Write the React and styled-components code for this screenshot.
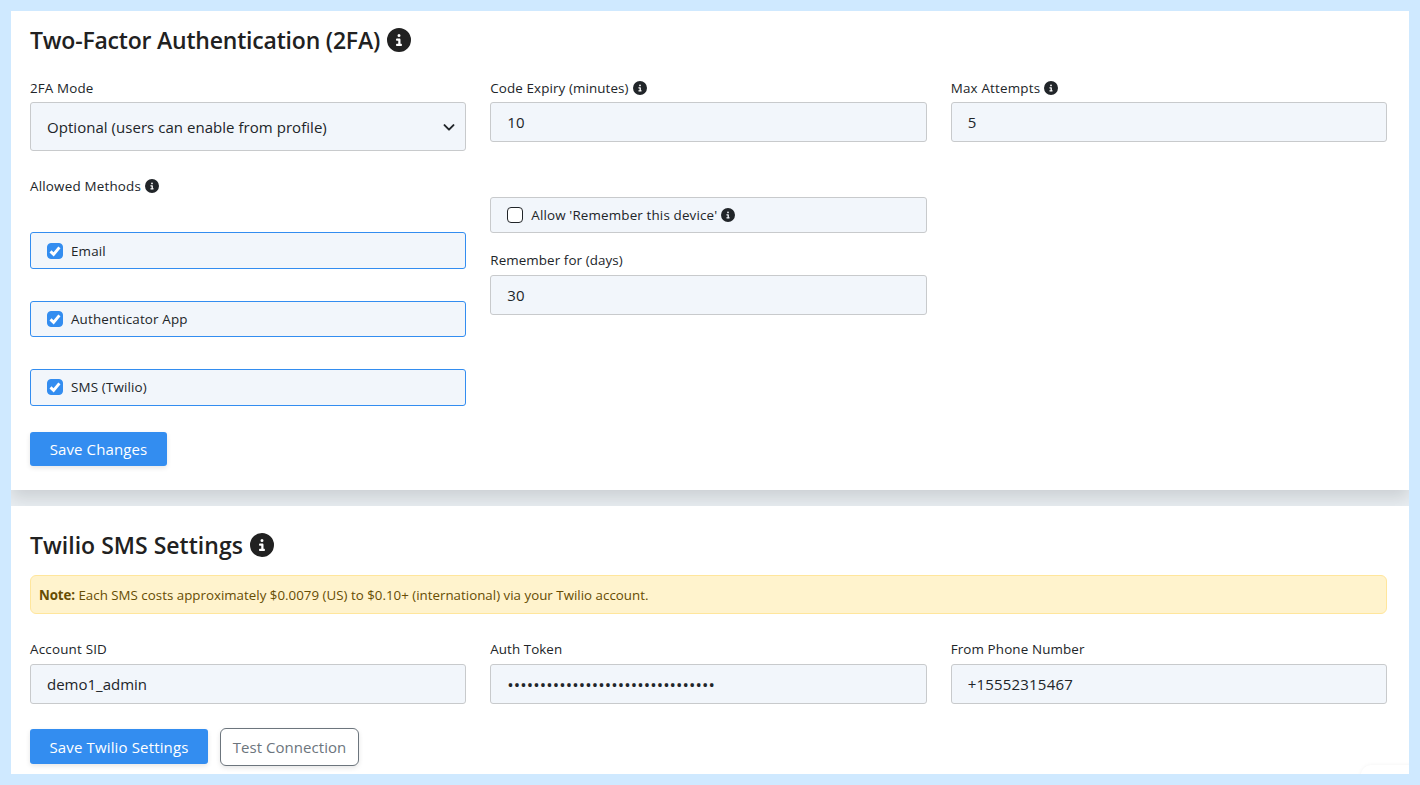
import React from "react";
import styled, { createGlobalStyle } from "styled-components";
import { FaCircleInfo } from "react-icons/fa6";

const GlobalStyle = createGlobalStyle`
  *, *::before, *::after { box-sizing: border-box; }
  html, body { margin: 0; padding: 0; }
  body {
    font-family: "Open Sans", "Noto Sans", sans-serif;
    color: #212529;
    background: #cfe9ff;
    overflow: hidden;
  }
  input, select, button { font: inherit; color: inherit; }
`;

const Page = styled.main`
  width: 1420px;
  height: 785px;
  padding: 11px;
  background: #cfe9ff;
`;

const Content = styled.div`
  position: relative;
  height: 763px;
  overflow: hidden;
  display: flex;
  flex-direction: column;
  gap: 16px;
  background: #e9eef2;
`;

const Card = styled.section`
  background: #fff;
  height: ${(p) => p.$height}px;
  flex: none;
  padding: ${(p) => p.$top}px 22px 0 19px;
  box-shadow: ${(p) => (p.$raised ? "0 8px 16px rgba(0, 0, 0, 0.13)" : "none")};
`;

const Title = styled.h2`
  margin: 0;
  height: 32px;
  display: flex;
  align-items: center;
  gap: 7px;
  font-size: 23px;
  line-height: 32px;
  font-weight: 600;
  color: #212121;
  white-space: nowrap;
  letter-spacing: ${(p) => p.$tracking};
  svg { width: 24px; height: 24px; flex: none; margin-bottom: 1px; }
`;

const Columns = styled.div`
  display: grid;
  grid-template-columns: repeat(3, 1fr);
  column-gap: 24px;
  align-items: start;
  margin-top: ${(p) => p.$top}px;
`;

const Stack = styled.div`
  display: flex;
  flex-direction: column;
  padding-top: ${(p) => p.$top || 0}px;
`;

const Label = styled.label`
  display: flex;
  align-items: center;
  gap: 4px;
  height: 20px;
  margin-bottom: ${(p) => p.$gap || 4}px;
  font-size: 13.4px;
  line-height: 20px;
  white-space: nowrap;
  letter-spacing: ${(p) => p.$tracking || "0.13px"};
  svg { width: 14px; height: 14px; flex: none; }
`;

const Input = styled.input`
  width: 100%;
  height: 40px;
  padding: 0 16px;
  border: 1px solid #c8cacc;
  border-radius: 3px;
  background: #f2f6fb;
  font-size: 15px;
  letter-spacing: ${(p) => p.$tracking || "0"};
  outline: none;
  &[type="password"] {
    font-size: 17px;
    letter-spacing: 0.1px;
  }
`;

const SelectBox = styled.div`
  display: flex;
  align-items: center;
  justify-content: space-between;
  height: 49px;
  padding: 0 10px 0 16px;
  border: 1px solid #c8cacc;
  border-radius: 3px;
  background: #f2f6fb;
  font-size: 15px;
  letter-spacing: 0.04px;
  svg { width: 12px; height: 12px; }
`;

const Methods = styled.div`
  display: flex;
  flex-direction: column;
  gap: 32px;
  margin-top: 32.4px;
`;

const Option = styled.label`
  display: flex;
  align-items: center;
  height: 36.4px;
  padding: 0 16px;
  gap: 8px;
  border: 1px solid ${(p) => (p.$on ? "#338df0" : "#c8cacc")};
  border-radius: 3px;
  background: #f2f6fb;
  font-size: 13.4px;
  white-space: nowrap;
`;

const OptionText = styled.span`
  display: flex;
  align-items: center;
  gap: 4px;
  letter-spacing: 0.15px;
  svg { width: 14px; height: 14px; }
`;

const Check = styled.span`
  display: flex;
  align-items: center;
  justify-content: center;
  width: 16px;
  height: 16px;
  border: 1px solid ${(p) => (p.$on ? "#338df0" : "#212529")};
  border-radius: 4px;
  background: ${(p) => (p.$on ? "#338df0" : "#fff")};
  svg { width: 12px; height: 12px; flex: none; }
`;

const Actions = styled.div`
  display: flex;
  align-items: ${(p) => p.$align || "center"};
  gap: 12px;
  margin-top: ${(p) => p.$top}px;
`;

const Primary = styled.button`
  width: ${(p) => p.$width}px;
  height: ${(p) => p.$height}px;
  margin-top: ${(p) => p.$drop || 0}px;
  padding: 0;
  border: 0;
  border-radius: 3px;
  background: #338df0;
  color: #fff;
  font-size: 15px;
  white-space: nowrap;
  letter-spacing: ${(p) => p.$tracking || "0"};
  box-shadow: 0 2px 5px rgba(0, 0, 0, 0.1);
`;

const Outline = styled(Primary)`
  border: 1px solid #6c757d;
  border-radius: 6px;
  background: #fff;
  color: #6c757d;
`;

const Note = styled.p`
  display: flex;
  align-items: center;
  height: 39px;
  margin: 14px 0 0;
  padding: 0 8px;
  border: 1px solid #ffe69c;
  border-radius: 6px;
  background: #fff3cd;
  color: #664d03;
  font-size: 13.3px;
  letter-spacing: 0.02px;
  white-space: pre;
  b { letter-spacing: -0.1px; }
`;

const Corner = styled.div`
  position: absolute;
  left: 1350px;
  top: 754px;
  width: 70px;
  height: 40px;
  border-radius: 10px;
  background: #fff;
  box-shadow: 0 0 4px rgba(0, 0, 0, 0.05);
`;

const Tick = () => (
  <svg viewBox="0 0 12 12" fill="none">
    <path d="M1.5 6.4 4.6 9.4 10.4 2.3" stroke="#fff" strokeWidth="2.9" />
  </svg>
);

const Chevron = () => (
  <svg viewBox="0 0 16 16" fill="none">
    <path d="m2 5.5 6 6 6-6" stroke="#212529" strokeWidth="2.6" strokeLinecap="round" strokeLinejoin="round" />
  </svg>
);

const methods = ["Email", "Authenticator App", "SMS (Twilio)"];

export default function App() {
  return (
    <Page>
      <GlobalStyle />
      <Content>
        <Card $height={479} $top={13} $raised>
          <Title $tracking="-0.2px">Two-Factor Authentication (2FA) <FaCircleInfo /></Title>
          <Columns $top={22}>
            <Stack>
              <Label>2FA Mode</Label>
              <SelectBox>Optional (users can enable from profile)<Chevron /></SelectBox>
              <Stack $top={25}>
                <Label $tracking="0.2px">Allowed Methods <FaCircleInfo /></Label>
                <Methods>
                  {methods.map((name) => (
                    <Option key={name} $on>
                      <Check $on><Tick /></Check>
                      <OptionText>{name}</OptionText>
                    </Option>
                  ))}
                </Methods>
              </Stack>
            </Stack>
            <Stack>
              <Label $tracking="0.1px">Code Expiry (minutes) <FaCircleInfo /></Label>
              <Input defaultValue="10" />
              <Stack $top={55}>
                <Option>
                  <Check />
                  <OptionText>Allow 'Remember this device' <FaCircleInfo /></OptionText>
                </Option>
              </Stack>
              <Stack $top={16.6}>
                <Label $gap={5} $tracking="0.08px">Remember for (days)</Label>
                <Input defaultValue="30" />
              </Stack>
            </Stack>
            <Stack>
              <Label $tracking="0.2px">Max Attempts <FaCircleInfo /></Label>
              <Input defaultValue="5" />
            </Stack>
          </Columns>
          <Actions $top={26.4}>
            <Primary $width={137} $height={34} $tracking="0.1px">Save Changes</Primary>
          </Actions>
        </Card>
        <Card $height={268} $top={23}>
          <Title $tracking="0.02px">Twilio SMS Settings <FaCircleInfo /></Title>
          <Note><b>Note:</b> Each SMS costs approximately $0.0079 (US) to $0.10+ (international) via your Twilio account.</Note>
          <Columns $top={25}>
            <Stack>
              <Label $gap={5} $tracking="0.2px">Account SID</Label>
              <Input defaultValue="demo1_admin" />
            </Stack>
            <Stack>
              <Label $gap={5} $tracking="0.05px">Auth Token</Label>
              <Input type="password" defaultValue="00000000000000000000000000000000" />
            </Stack>
            <Stack>
              <Label $gap={5}>From Phone Number</Label>
              <Input defaultValue="+15552315467" $tracking="0.2px" />
            </Stack>
          </Columns>
          <Actions $top={24} $align="flex-start">
            <Primary $width={178} $height={35} $drop={1} $tracking="0.15px">Save Twilio Settings</Primary>
            <Outline $width={139} $height={38} $tracking="0.05px">Test Connection</Outline>
          </Actions>
        </Card>
        <Corner />
      </Content>
    </Page>
  );
}
